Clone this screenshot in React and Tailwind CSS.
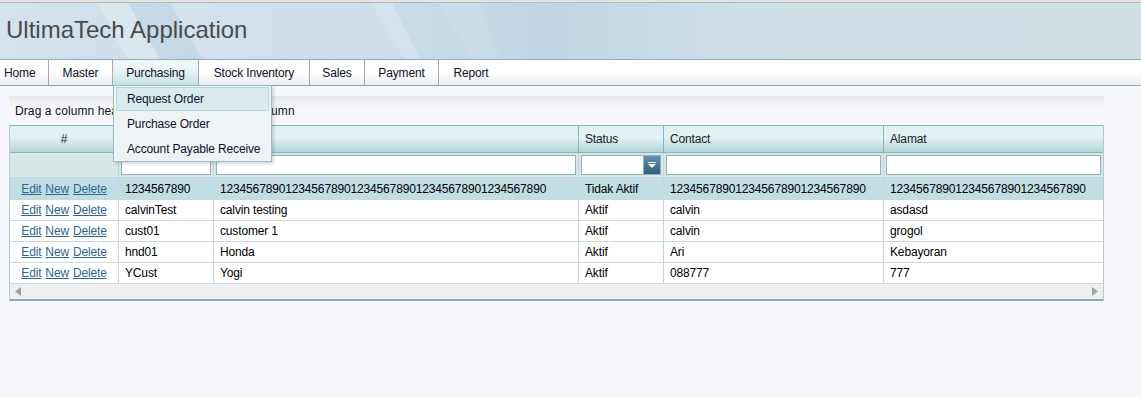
import React from "react";

const menus = [
  { label: "Home", w: "w-[49px]", cls: "pl-1 text-left" },
  { label: "Master", w: "w-[64px]" },
  { label: "Purchasing", w: "w-[86px]", active: true },
  { label: "Stock Inventory", w: "w-[111px]" },
  { label: "Sales", w: "w-[55px]" },
  { label: "Payment", w: "w-[74px]" },
  { label: "Report", w: "w-[64px]", last: true },
];

const rows = [
  {
    code: "1234567890",
    name: "12345678901234567890123456789012345678901234567890",
    status: "Tidak Aktif",
    contact: "123456789012345678901234567890",
    alamat: "123456789012345678901234567890",
  },
  { code: "calvinTest", name: "calvin testing", status: "Aktif", contact: "calvin", alamat: "asdasd" },
  { code: "cust01", name: "customer 1", status: "Aktif", contact: "calvin", alamat: "grogol" },
  { code: "hnd01", name: "Honda", status: "Aktif", contact: "Ari", alamat: "Kebayoran" },
  { code: "YCust", name: "Yogi", status: "Aktif", contact: "088777", alamat: "777" },
];

const cols = "grid grid-cols-[109px_95px_365px_85px_220px_219px]";

// header banner with soft diagonal streaks
function HeaderBg() {
  return (
    <svg className="absolute inset-0" width="1141" height="56" viewBox="0 0 1141 56">
      <defs>
        <linearGradient id="hg" x1="0" x2="1" y1="0" y2="0">
          <stop offset="0" stopColor="#d3e2eb" />
          <stop offset="0.38" stopColor="#c7dae7" />
          <stop offset="0.48" stopColor="#c0d6e4" />
          <stop offset="0.66" stopColor="#cee0e7" />
          <stop offset="1" stopColor="#d0e0e5" />
        </linearGradient>
      </defs>
      <rect width="1141" height="56" fill="url(#hg)" />
      <polygon points="98,0 128,0 160,56 128,56" fill="#ffffff" opacity="0.22" />
      <polygon points="128,0 170,0 202,56 160,56" fill="#a9c6dc" opacity="0.25" />
      <polygon points="170,0 370,0 405,56 202,56" fill="#ffffff" opacity="0.1" />
      <polygon points="370,0 392,0 420,56 405,56" fill="#ffffff" opacity="0.2" />
      <polygon points="440,0 480,0 500,56 470,56" fill="#ffffff" opacity="0.08" />
    </svg>
  );
}

function Tri({ dir }) {
  return (
    <svg width="6" height="9" viewBox="0 0 6 9">
      {dir === "left" ? (
        <polygon points="6,0 0,4.5 6,9" fill="#a0a0a0" />
      ) : (
        <polygon points="0,0 6,4.5 0,9" fill="#a0a0a0" />
      )}
    </svg>
  );
}

export default function App() {
  return (
    <div className="w-[1141px] h-[397px] overflow-hidden bg-[#f6f8fd] font-['Liberation_Sans',Arial,sans-serif] text-[12px] text-black relative">
      <div className="h-[2px] bg-[#e2e2e2]" />
      {/* Header */}
      <div className="relative h-[58px] border-t border-b border-t-[#b8b8b8] border-b-[#98a9b1] overflow-hidden">
        <HeaderBg />
        <div className="relative h-full flex items-center pl-[6px] pb-[2px] text-[24px] text-[#4a4a4c]">
          UltimaTech Application
        </div>
      </div>

      <div className="tracking-[-0.15px]">
        {/* Menu */}
        <div className="flex h-[26px] border-b border-[#8aa6aa] bg-gradient-to-b from-white from-40% to-[#eceef1]">
          {menus.map((m) => (
            <div
              key={m.label}
              className={`${m.w} h-full flex items-center ${m.cls ? "pl-1" : "justify-center"} ${
                m.last ? "" : "border-r border-[#a8a8a8]"
              } ${m.active ? "bg-gradient-to-b from-[#eef6f7] from-30% to-[#c5e0e4]" : ""} text-[#10102a]`}
            >
              {m.label}
            </div>
          ))}
        </div>

        {/* Grid */}
        <div className="pl-[9px] pt-[10px] w-[1104px]">
          <div className="h-[29px] bg-gradient-to-b from-[#e4e6ea] to-[#f6f8fc] to-40% flex items-center pl-[6px] text-[#111] tracking-[0.1px]">
            Drag a column header here to group by that column
          </div>
          <div className="border-x border-[#b9c9cc]">
            {/* column header */}
            <div className={`${cols} h-[28px] border-y border-[#89b3b7] bg-gradient-to-b from-[#e0f1f3] from-45% to-[#b4d5d9] text-[#1a1a1a]`}>
              <div className="border-r border-[#89b3b7] flex items-center justify-center">#</div>
              <div className="border-r border-[#89b3b7]" />
              <div className="border-r border-[#89b3b7]" />
              <div className="border-r border-[#89b3b7] flex items-center pl-[6px]">Status</div>
              <div className="border-r border-[#89b3b7] flex items-center pl-[6px]">Contact</div>
              <div className="flex items-center pl-[6px]">Alamat</div>
            </div>
            {/* filter row */}
            <div className={`${cols} h-[25px] bg-[#d9e6e8] border-b border-[#c4d6d9]`}>
              <div className="border-r border-[#c4d6d9]" />
              {[0, 1, 2, 3, 4].map((i) => (
                <div key={i} className={`${i < 4 ? "border-r border-[#c4d6d9]" : ""} px-[2px] pt-[2px]`}>
                  <div className="h-[20px] bg-white border border-[#8fb2b6] flex justify-end">
                    {i === 2 && (
                      <div className="w-[17px] h-full bg-gradient-to-b from-[#6494b2] to-[#2f5d7d] border-l border-[#8fb2b6] flex items-center justify-center">
                        <svg width="8" height="6" viewBox="0 0 8 6">
                          <rect x="0" y="0" width="8" height="1" fill="#ffffff" />
                          <polygon points="0,2 8,2 4,6" fill="#ffffff" />
                        </svg>
                      </div>
                    )}
                  </div>
                </div>
              ))}
            </div>
            {/* data rows */}
            {rows.map((r, idx) => (
              <div
                key={r.code}
                className={`${cols} ${idx === 0 ? "h-[22px] bg-[#c0dee4]" : "h-[21px] bg-white"} border-b border-[#cad9dc]`}
              >
                <div className="border-r border-[#c6d6d9] flex items-center justify-center gap-[4px] text-[#2f6690]">
                  <span className="underline">Edit</span>
                  <span className="underline">New</span>
                  <span className="underline">Delete</span>
                </div>
                <div className="border-r border-[#c6d6d9] flex items-center pl-[6px]">{r.code}</div>
                <div className="border-r border-[#c6d6d9] flex items-center pl-[6px]">{r.name}</div>
                <div className="border-r border-[#c6d6d9] flex items-center pl-[6px]">{r.status}</div>
                <div className="border-r border-[#c6d6d9] flex items-center pl-[6px]">{r.contact}</div>
                <div className="flex items-center pl-[6px]">{r.alamat}</div>
              </div>
            ))}
            {/* scrollbar */}
            <div className="h-[17px] bg-[#efefef] border-b-2 border-[#7eafb3] flex items-center justify-between px-[5px]">
              <Tri dir="left" />
              <Tri dir="right" />
            </div>
          </div>
        </div>

        {/* Dropdown */}
        <div className="absolute left-[113px] top-[85px] w-[159px] h-[77px] bg-[#eef4f6] border border-[#9dbbbf] shadow-[2px_2px_3px_rgba(0,0,0,0.15)] px-[2px] pt-[1px] text-[#10102a]">
          <div className="h-[24px] flex items-center pl-[10px] bg-[#d8ecee] border border-[#b6d8dc]">Request Order</div>
          <div className="h-[25px] flex items-center pl-[11px]">Purchase Order</div>
          <div className="h-[25px] flex items-center pl-[11px]">Account Payable Receive</div>
        </div>
      </div>
    </div>
  );
}
